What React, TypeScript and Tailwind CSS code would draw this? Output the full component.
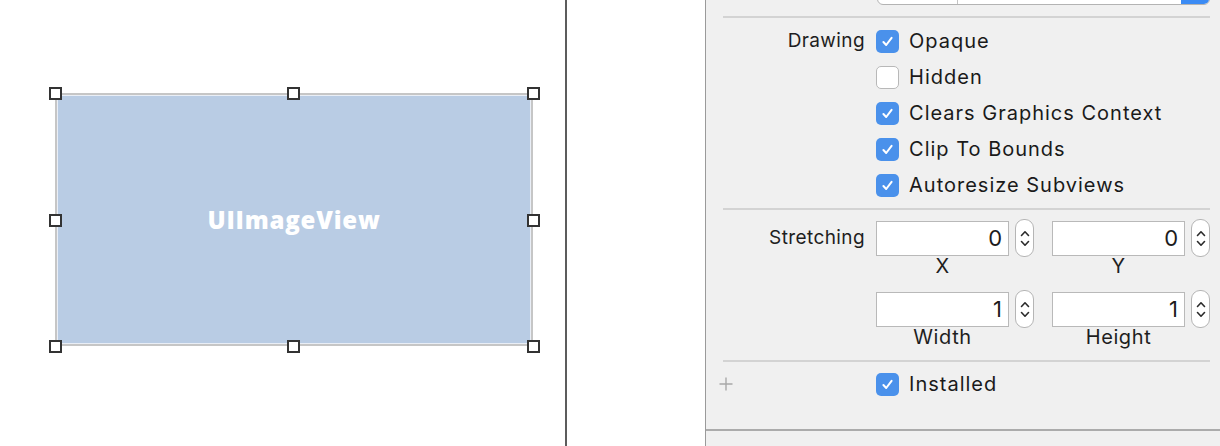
import React from "react";

const font = { fontFamily: "Inter, 'Noto Sans', sans-serif" };

function Check({ on }: { on: boolean }) {
  return on ? (
    <div className="w-[23px] h-[23px] rounded-[5px] bg-[#4a91eb] flex items-center justify-center shrink-0">
      <svg width="15" height="15" viewBox="0 0 15 15">
        <path d="M3.4 8 L6.2 11 L11.6 3.8" stroke="white" strokeWidth="2" fill="none" strokeLinecap="round" strokeLinejoin="round" />
      </svg>
    </div>
  ) : (
    <div className="w-[23px] h-[23px] rounded-[5px] bg-white border border-[#b8b8b8] shrink-0" />
  );
}

function Stepper() {
  return (
    <div className="w-[19px] h-[38px] rounded-[9px] bg-white border border-[#b5b5b5] flex flex-col items-center justify-center gap-[3px] shrink-0">
      <svg width="10" height="7" viewBox="0 0 10 7">
        <path d="M1.5 5.5 L5 1.8 L8.5 5.5" stroke="#2a2a2a" strokeWidth="1.6" fill="none" strokeLinecap="round" strokeLinejoin="round" />
      </svg>
      <svg width="10" height="7" viewBox="0 0 10 7">
        <path d="M1.5 1.5 L5 5.2 L8.5 1.5" stroke="#2a2a2a" strokeWidth="1.6" fill="none" strokeLinecap="round" strokeLinejoin="round" />
      </svg>
    </div>
  );
}

function NumField({ value, label }: { value: string; label: string }) {
  return (
    <div className="flex flex-col">
      <div className="flex items-center gap-[6px]">
        <div className="w-[133px] h-[35px] bg-white border border-[#b9b9b9] flex items-center justify-end pr-[6px] text-[22px] text-[#1c1c1c]">
          {value}
        </div>
        <Stepper />
      </div>
      <div className="w-[133px] text-center text-[20px] leading-[22px] tracking-[0.6px] text-[#1e1e1e] -mt-[2px]">{label}</div>
    </div>
  );
}

const labelCls = "w-[153px] pr-[11px] text-right text-[19px] tracking-[0.4px] text-[#1e1e1e] shrink-0";

function CheckRow({ on, text, label }: { on: boolean; text: string; label?: string }) {
  return (
    <div className="flex items-center h-[36px]">
      <div className={labelCls}>{label ?? ""}</div>
      <Check on={on} />
      <div className="ml-[10px] text-[20px] tracking-[1px] text-[#1a1a1a]">{text}</div>
    </div>
  );
}

function Handle() {
  return <div className="w-[13px] h-[13px] bg-white border-2 border-[#333333]" />;
}

export default function App() {
  return (
    <div className="w-[1220px] h-[446px] flex overflow-hidden bg-white" style={font}>
      {/* canvas */}
      <div className="w-[566px] h-full bg-white pl-[49px] pt-[87px]">
        <div className="relative w-[491px] h-[266px]">
          <div className="absolute left-[6px] top-[6px] w-[478px] h-[253px] border-2 border-[#c6c6c6] bg-[#e9eef6] p-[1px]">
            <div className="w-full h-full bg-[#b9cce4] flex items-center justify-center">
              <span className="text-[24px] font-extrabold text-white tracking-[0.8px]" style={{ fontFamily: "'Open Sans', Inter, sans-serif" }}>
                UIImageView
              </span>
            </div>
          </div>
          <div className="absolute left-0 top-0"><Handle /></div>
          <div className="absolute left-[238px] top-0"><Handle /></div>
          <div className="absolute left-[478px] top-0"><Handle /></div>
          <div className="absolute left-0 top-[127px]"><Handle /></div>
          <div className="absolute left-[478px] top-[127px]"><Handle /></div>
          <div className="absolute left-0 top-[253px]"><Handle /></div>
          <div className="absolute left-[238px] top-[253px]"><Handle /></div>
          <div className="absolute left-[478px] top-[253px]"><Handle /></div>
        </div>
      </div>
      <div className="w-[2px] h-full bg-[#5c5c5c]" />
      <div className="w-[138px] h-full bg-white" />
      <div className="w-[1px] h-full bg-[#9a9a9a]" />
      {/* inspector */}
      <div className="flex-1 h-full bg-[#f0f0f0] flex flex-col">
        <div className="pl-[17px] pr-[10px] flex flex-col">
          {/* partial top field */}
          <div className="ml-[154px] -mt-[20px] h-[25px] flex border border-[#b3b3b3] rounded-b-[6px] bg-white overflow-hidden">
            <div className="w-[80px] border-r border-[#c4c4c4]" />
            <div className="flex-1" />
            <div className="w-[28px] bg-[#3b8bf4]" />
          </div>
          <div className="h-[11px]" />
          <div className="h-[2px] bg-[#d3d3d3]" />
          <div className="pt-[5px] flex flex-col">
            <CheckRow on label="Drawing" text="Opaque" />
            <CheckRow on={false} text="Hidden" />
            <CheckRow on text="Clears Graphics Context" />
            <CheckRow on text="Clip To Bounds" />
            <CheckRow on text="Autoresize Subviews" />
          </div>
          <div className="h-[5px]" />
          <div className="h-[2px] bg-[#d3d3d3]" />
          <div className="flex pt-[9px]">
            <div className={labelCls + " pt-[5px]"}>Stretching</div>
            <div className="flex flex-col gap-[13px]">
              <div className="flex gap-[18px]">
                <NumField value="0" label="X" />
                <NumField value="0" label="Y" />
              </div>
              <div className="flex gap-[18px]">
                <NumField value="1" label="Width" />
                <NumField value="1" label="Height" />
              </div>
            </div>
          </div>
          <div className="h-[12px]" />
          <div className="h-[2px] bg-[#d3d3d3]" />
          <div className="flex items-center h-[44px]">
            <div className="w-[153px] shrink-0 -ml-[4px]">
              <svg width="14" height="14" viewBox="0 0 14 14">
                <path d="M7 0.5 V13.5 M0.5 7 H13.5" stroke="#a8a8a8" strokeWidth="1.4" />
              </svg>
            </div>
            <div className="ml-[4px] flex items-center">
              <Check on />
              <div className="ml-[10px] text-[20px] tracking-[1px] text-[#1a1a1a]">Installed</div>
            </div>
          </div>
        </div>
        <div className="flex-1" />
        <div className="h-[2px] bg-[#ababab]" />
        <div className="h-[15px]" />
      </div>
    </div>
  );
}
